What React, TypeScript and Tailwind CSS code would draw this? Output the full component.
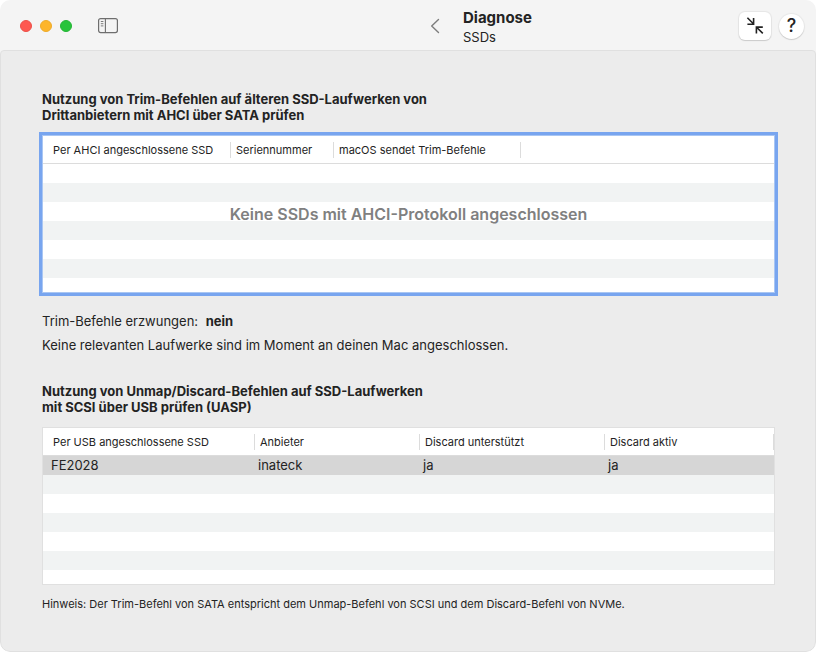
import clsx from "clsx";

type Column = { label: string; width?: number };

const ahciColumns: Column[] = [
  { label: "Per AHCI angeschlossene SSD", width: 188 },
  { label: "Seriennummer", width: 103 },
  { label: "macOS sendet Trim-Befehle", width: 187 },
  { label: "" },
];

const usbColumns: Column[] = [
  { label: "Per USB angeschlossene SSD", width: 212 },
  { label: "Anbieter", width: 165 },
  { label: "Discard unterstützt", width: 185 },
  { label: "Discard aktiv" },
];

const usbRows = [["FE2028", "inateck", "ja", "ja"]];

const VISIBLE_ROWS = 7;

function DataTable({ label, columns, rows }: { label: string; columns: Column[]; rows: string[][] }) {
  return (
    <table aria-label={label} className="w-full table-fixed border-separate border-spacing-0 bg-white">
      <colgroup>
        {columns.map((col, i) => (
          <col key={i} style={col.width ? { width: col.width } : undefined} />
        ))}
      </colgroup>
      <thead>
        <tr className="h-7">
          {columns.map((col, i) => (
            <th key={i} scope="col" className="border-b border-[#dcdcdc] p-0 text-left text-[11px] font-normal">
              {col.label && (
                <div className={clsx("h-4 truncate border-r border-[#dcdcdc] leading-4", i === 0 ? "pl-[10px]" : "pl-[5px]")}>
                  {col.label}
                </div>
              )}
            </th>
          ))}
        </tr>
      </thead>
      <tbody>
        {Array.from({ length: VISIBLE_ROWS }, (_, r) => (
          <tr
            key={r}
            className={clsx(
              r === VISIBLE_ROWS - 1 ? "h-[14px]" : "h-[19px]",
              rows[r] ? "bg-[#d6d6d6]" : r % 2 === 1 && "bg-[#f1f3f3]",
            )}
          >
            {columns.map((_, c) => (
              <td key={c} className={clsx("truncate p-0 align-top text-[13px] leading-[18px]", c === 0 ? "pl-2" : "pl-[3px]")}>
                {rows[r]?.[c]}
              </td>
            ))}
          </tr>
        ))}
      </tbody>
    </table>
  );
}

function SidebarIcon() {
  return (
    <svg width="20" height="16" viewBox="0 0 20 16" fill="none" stroke="#6e6e6e">
      <rect x="0.6" y="0.6" width="18.8" height="14" rx="2" strokeWidth="1.2" />
      <path d="M7.4 0.6v14" strokeWidth="1.1" />
      <path d="M2.8 3.5h2.6M2.8 5.7h2.6M2.8 7.9h2.6" strokeWidth="0.9" />
    </svg>
  );
}

function BackIcon() {
  return (
    <svg width="10" height="16" viewBox="0 0 10 16" fill="none" stroke="#7d7d7d" strokeWidth="1.4" strokeLinecap="round" strokeLinejoin="round">
      <path d="M8.5 1.5L1.7 8l6.8 6.5" />
    </svg>
  );
}

function ShrinkIcon() {
  return (
    <svg width="18" height="18" viewBox="0 0 18 18" fill="none" stroke="#222" strokeWidth="1.6">
      <path d="M1.4 0.8l6 6M7.6 0.9v6.3H1.4" />
      <path d="M16.8 16.4l-6-5.9M10.4 16.4v-6.3h6.4" />
    </svg>
  );
}

export default function App() {
  return (
    <div className="flex min-h-screen flex-col overflow-hidden rounded-[10px] bg-[#f4f4f4] font-['Inter','Liberation_Sans',sans-serif] text-[13px] leading-4 text-[#232323]">
      <header className="flex h-[50px] items-center pt-0.5 pr-3">
        <div className="flex w-[430px] items-center">
          <div className="flex gap-2 pl-5">
            <button aria-label="Schließen" className="size-3 rounded-full border border-[#ec5048] bg-[#fe5850]" />
            <button aria-label="Minimieren" className="size-3 rounded-full border border-[#eeab2a] bg-[#fdb52b]" />
            <button aria-label="Zoomen" className="size-3 rounded-full border border-[#24b535] bg-[#27c43a]" />
          </div>
          <button aria-label="Seitenleiste" className="ml-[26px]">
            <SidebarIcon />
          </button>
        </div>
        <button aria-label="Zurück">
          <BackIcon />
        </button>
        <div className="ml-[23px] flex-1 pt-0.5 leading-5">
          <h1 className="text-[15px] font-bold">Diagnose</h1>
          <p className="leading-[18px]">SSDs</p>
        </div>
        <div className="flex items-center gap-2">
          <button aria-label="Verkleinern" className="grid h-7 w-8 place-items-center rounded-md bg-white shadow-[0_0_1px_1px_rgba(0,0,0,0.06),0_1px_1px_rgba(0,0,0,0.12)]">
            <ShrinkIcon />
          </button>
          <button aria-label="Hilfe" className="size-[25px] rounded-full bg-white text-lg leading-6 font-medium shadow-[0_0_1px_1px_rgba(0,0,0,0.05),0_1px_1px_rgba(0,0,0,0.12)]">
            ?
          </button>
        </div>
      </header>

      <main className="flex-1 rounded-t-[4px] rounded-b-[10px] border border-[#e0e0e0] bg-[#ececec] pt-10 pr-10 pl-[41px]">
        <h2 className="font-bold">
          Nutzung von Trim-Befehlen auf älteren SSD-Laufwerken von
          <br />
          Drittanbietern mit AHCI über SATA prüfen
        </h2>
        <div className="relative mt-3 border border-[#a9c6f3] ring-3 ring-[#78a5ef]">
          <DataTable label="AHCI-SSDs" columns={ahciColumns} rows={[]} />
          <p className="absolute inset-0 grid place-items-center text-base font-semibold text-[#808080]">
            Keine SSDs mit AHCI-Protokoll angeschlossen
          </p>
        </div>
        <p className="mt-5">
          Trim-Befehle erzwungen: <strong className="ml-1">nein</strong>
        </p>
        <p className="mt-2">Keine relevanten Laufwerke sind im Moment an deinen Mac angeschlossen.</p>

        <h2 className="mt-[30px] font-bold">
          Nutzung von Unmap/Discard-Befehlen auf SSD-Laufwerken
          <br />
          mit SCSI über USB prüfen (UASP)
        </h2>
        <div className="mt-3 border border-[#e0e0e0]">
          <DataTable label="USB-SSDs" columns={usbColumns} rows={usbRows} />
        </div>
        <p className="mt-[11px] text-[11px]">
          Hinweis: Der Trim-Befehl von SATA entspricht dem Unmap-Befehl von SCSI und dem Discard-Befehl von NVMe.
        </p>
      </main>
    </div>
  );
}
